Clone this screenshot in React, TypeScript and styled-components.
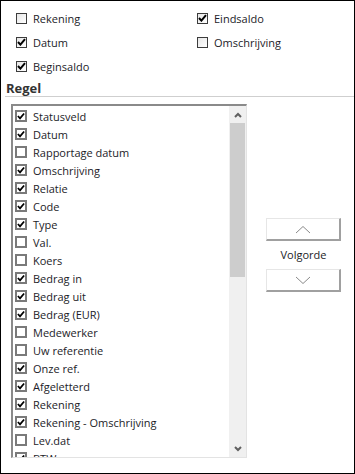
import React from "react";
import styled, { createGlobalStyle } from "styled-components";

const GlobalStyle = createGlobalStyle`
  html, body { margin: 0; padding: 0; background: #fff; }
  body { font-family: "Open Sans", "Noto Sans", Arial, sans-serif; }
`;

const Frame = styled.div`
  width: 355px;
  height: 474px;
  box-sizing: border-box;
  border: 1px solid #000;
  background: #fff;
  overflow: hidden;
  color: #1c1c28;
  font-size: 11px;
`;

const Options = styled.div`
  display: grid;
  grid-template-columns: 181px 1fr;
  grid-auto-rows: 24px;
  padding: 5px 0 0 15px;
`;

const OptionRow = styled.label`
  display: flex;
  align-items: center;
  gap: 6px;
  height: 24px;
`;

const Box = styled.span<{ $list?: boolean }>`
  flex: none;
  box-sizing: border-box;
  width: ${(p) => (p.$list ? 12 : 11)}px;
  height: ${(p) => (p.$list ? 12 : 11)}px;
  border: ${(p) => (p.$list ? "2px solid #7a7a7a" : "1px solid #3c3c3c")};
  background: ${(p) => (p.$list ? "#fff" : "linear-gradient(135deg, #e6e6e6, #fff)")};
  display: flex;
  align-items: center;
  justify-content: center;
`;

const Heading = styled.div`
  margin: 2px 0 0 5px;
  font-weight: 700;
  font-size: 13px;
  color: #333;
  line-height: 16px;
  height: 16px;
`;

const Separator = styled.div`
  margin: 0 0 0 4px;
  height: 1px;
  background: #cfcfcf;
`;

const Body = styled.div`
  display: flex;
  padding: 7px 0 0 10px;
`;

const ListBox = styled.div`
  width: 236px;
  height: 354px;
  box-sizing: border-box;
  border-top: 2px solid #8a8a8a;
  border-left: 2px solid #8a8a8a;
  border-right: 1px solid #e3e3e3;
  border-bottom: 1px solid #e3e3e3;
  display: flex;
  overflow: hidden;
`;

const Items = styled.div`
  flex: 1;
  padding: 1px 0 0 2px;
  overflow: hidden;
`;

const Item = styled.div`
  display: flex;
  align-items: center;
  gap: 6px;
  height: 18px;
  white-space: nowrap;
`;

const Scrollbar = styled.div`
  width: 17px;
  background: #f0f0f0;
  display: flex;
  flex-direction: column;
  align-items: center;
`;

const ScrollArrow = styled.div`
  height: 17px;
  width: 17px;
  display: flex;
  align-items: center;
  justify-content: center;
`;

const Thumb = styled.div`
  width: 15px;
  height: 154px;
  background: #cdcdcd;
`;

const Spacer = styled.div`
  flex: 1;
`;

const OrderColumn = styled.div`
  display: flex;
  flex-direction: column;
  align-items: center;
  margin: 114px 0 0 19px;
  width: 75px;
`;

const OrderButton = styled.button`
  width: 75px;
  height: 23px;
  box-sizing: border-box;
  background: #fff;
  border-top: 1px solid #e6e6e6;
  border-left: 1px solid #e6e6e6;
  border-right: 2px solid #a0a0a0;
  border-bottom: 2px solid #a0a0a0;
  padding: 0;
  display: flex;
  align-items: center;
  justify-content: center;
`;

const OrderLabel = styled.div`
  height: 28px;
  line-height: 28px;
  font-size: 11px;
`;

const Tick = () => (
  <svg width="9" height="8" viewBox="0 0 9 8">
    <path d="M1 4 L3.4 6.6 L8 1.2" fill="none" stroke="#000" strokeWidth="2" />
  </svg>
);

const Check = ({ checked, list }: { checked: boolean; list?: boolean }) => (
  <Box $list={list}>{checked && <Tick />}</Box>
);

const options: [string, boolean][] = [
  ["Rekening", false],
  ["Eindsaldo", true],
  ["Datum", true],
  ["Omschrijving", false],
  ["Beginsaldo", true],
];

const fields: [string, boolean][] = [
  ["Statusveld", true],
  ["Datum", true],
  ["Rapportage datum", false],
  ["Omschrijving", true],
  ["Relatie", true],
  ["Code", true],
  ["Type", true],
  ["Val.", false],
  ["Koers", false],
  ["Bedrag in", true],
  ["Bedrag uit", true],
  ["Bedrag (EUR)", true],
  ["Medewerker", false],
  ["Uw referentie", false],
  ["Onze ref.", true],
  ["Afgeletterd", true],
  ["Rekening", true],
  ["Rekening - Omschrijving", true],
  ["Lev.dat", false],
  ["BTW", true],
];

export default function App() {
  return (
    <>
      <GlobalStyle />
      <Frame>
        <Options>
          {options.map(([label, on]) => (
            <OptionRow key={label}>
              <Check checked={on} />
              {label}
            </OptionRow>
          ))}
        </Options>
        <Heading>Regel</Heading>
        <Separator />
        <Body>
          <ListBox>
            <Items>
              {fields.map(([label, on], i) => (
                <Item key={i}>
                  <Check checked={on} list />
                  {label}
                </Item>
              ))}
            </Items>
            <Scrollbar>
              <ScrollArrow>
                <svg width="8" height="6" viewBox="0 0 8 6">
                  <path d="M1 5 L4 2 L7 5" fill="none" stroke="#606060" strokeWidth="2" />
                </svg>
              </ScrollArrow>
              <Thumb />
              <Spacer />
              <ScrollArrow>
                <svg width="8" height="6" viewBox="0 0 8 6">
                  <path d="M1 1 L4 4 L7 1" fill="none" stroke="#606060" strokeWidth="2" />
                </svg>
              </ScrollArrow>
            </Scrollbar>
          </ListBox>
          <OrderColumn>
            <OrderButton aria-label="Omhoog">
              <svg width="16" height="9" viewBox="0 0 16 9">
                <path d="M1 8 L8 1.5 L15 8" fill="none" stroke="#8a8a8a" strokeWidth="1" />
              </svg>
            </OrderButton>
            <OrderLabel>Volgorde</OrderLabel>
            <OrderButton aria-label="Omlaag">
              <svg width="16" height="9" viewBox="0 0 16 9">
                <path d="M1 1 L8 7.5 L15 1" fill="none" stroke="#8a8a8a" strokeWidth="1" />
              </svg>
            </OrderButton>
          </OrderColumn>
        </Body>
      </Frame>
    </>
  );
}
